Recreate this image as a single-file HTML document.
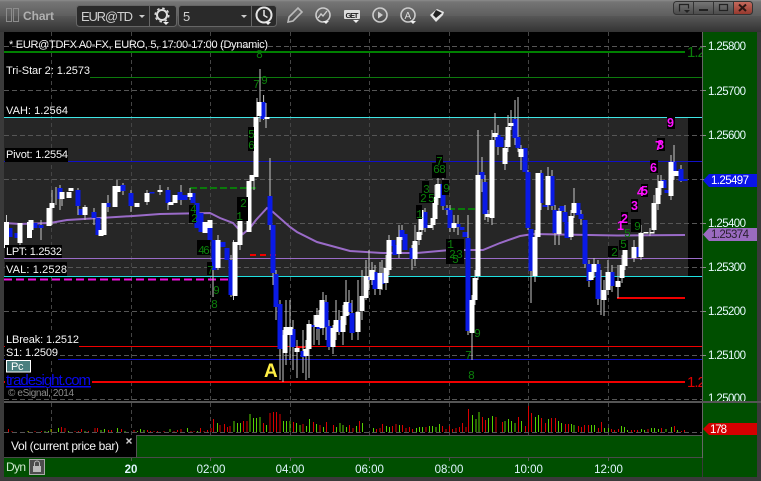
<!DOCTYPE html>
<html><head><meta charset="utf-8"><title>Chart</title>
<style>
html,body{margin:0;padding:0;background:#333;width:761px;height:481px;overflow:hidden}
svg{display:block}
text{font-family:"Liberation Sans",sans-serif;font-size:11px}
.l{fill:#f6f6f6}
.a{fill:#e8fbff;font-size:11.5px}
.g{fill:#0b7f0b;font-size:11.5px;font-family:"Liberation Mono",monospace}
.p{fill:#ff10ff;font-size:12.5px;font-weight:bold}
.t{fill:#e0f6ff;font-size:11.5px;text-anchor:middle}
</style></head><body>
<svg width="761" height="481" viewBox="0 0 761 481" xmlns="http://www.w3.org/2000/svg">
<defs>
<linearGradient id="h1" x1="0" y1="0" x2="0" y2="1"><stop offset="0" stop-color="#8c8c8c"/><stop offset=".12" stop-color="#757575"/><stop offset="1" stop-color="#5e5e5e"/></linearGradient>
<linearGradient id="h2" x1="0" y1="0" x2="0" y2="1"><stop offset="0" stop-color="#575757"/><stop offset="1" stop-color="#333"/></linearGradient>
<linearGradient id="rd" x1="0" y1="0" x2="0" y2="1"><stop offset="0" stop-color="#c4695c"/><stop offset="1" stop-color="#96392e"/></linearGradient>
<linearGradient id="bt" x1="0" y1="0" x2="0" y2="1"><stop offset="0" stop-color="#777"/><stop offset="1" stop-color="#4a4a4a"/></linearGradient>
</defs>
<rect width="761" height="481" fill="#3a3a3a"/>
<rect width="761" height="16" fill="url(#h1)"/>
<rect y="16" width="761" height="16" fill="url(#h2)"/>
<!-- main chart -->
<rect x="4" y="32" width="698" height="403" fill="#000"/>
<rect x="4" y="118" width="684" height="158" fill="#262626"/>
<!-- grid -->
<path d="M51.5 32V458M131.5 32V458M210.5 32V458M290.5 32V458M369.5 32V458M449.5 32V458M528.5 32V458M608.5 32V458" stroke="#444" stroke-width="1" stroke-dasharray="4 3" fill="none"/>
<path d="M4 46.500H702M4 90.500H702M4 135.500H702M4 179.500H702M4 223.500H702M4 267.500H702M4 311.500H702M4 355.500H702M4 399.500H702M4 432.500H702" stroke="#565656" stroke-width="1" stroke-dasharray="5 3" fill="none"/>
<!-- level lines -->
<rect x="4" y="51" width="681" height="2" fill="#008000"/>
<rect x="90" y="77" width="612" height="1" fill="#0c7a0c"/>
<rect x="4" y="117" width="698" height="1" fill="#3fe6e6"/>
<rect x="4" y="161" width="698" height="1" fill="#1010c8"/>
<rect x="4" y="258" width="698" height="1" fill="#9a6bc8"/>
<rect x="4" y="276" width="698" height="1" fill="#1fe0e0"/>
<path d="M4 279.500H228" stroke="#f010e0" stroke-width="2" stroke-dasharray="8 4" fill="none"/>
<rect x="4" y="346" width="698" height="1" fill="#f00000"/>
<rect x="4" y="359" width="698" height="1" fill="#1010c8"/>
<rect x="4" y="381" width="681" height="2" fill="#f00000"/>
<path d="M190 188H256" stroke="#0a7a0a" stroke-width="2" stroke-dasharray="7 3" fill="none"/>
<path d="M448 209H480" stroke="#0a7a0a" stroke-width="2" stroke-dasharray="7 3" fill="none"/>
<path d="M250 255H278" stroke="#f00000" stroke-width="2" stroke-dasharray="6 4" fill="none"/>
<rect x="296" y="347" width="9" height="1" fill="#f00"/>
<rect x="617" y="297" width="68" height="2" fill="#f00000"/>
<!-- purple average -->
<path d="M4 223L20 224L50 223L67 220L100 218L133 216L160 214L210 213L220 218L233 223L243 234L250 228L256 220L267 208L273 212L290 227L297 232L317 242L350 251L383 253L417 253L450 250L483 250L500 243L520 236L533 234L617 235.500L685 235" stroke="#9a6bc8" stroke-width="2" fill="none"/>
<!-- wicks -->
<path d="M6.500 215V250M20 225V245M41 220V240M52 190V225M56 187V205M60 185V210M62 190V206M78 188V215M85 205V220M94 208V225M108 195V212M117 180V200M123 183V195M131 190V212M147 190V205M160 185V195M168 187V210M181 185V205M190 188V200M213 263V297M218 235V270M231 255V297M233.500 240V300M240 215V250M257 98V120M260 69V122M263.600 95V120M266 103V128M254 150V190M270 158V230M273 225V285M276 270V320M280 300V380M283 330V382M286 300V365M290 300V360M293 320V370M297 340V378M303 330V373M306 340V380M309 320V378M314 315V345M317 308V340M319 310V345M323 292V335M326 295V340M329 320V350M333 325V354M336 300V340M339 310V335M343 305V345M346 280V325M349 290V315M352 300V340M358 280V340M362 270V320M366 260V300M369 250V290M372 262V285M375 265V295M380 262V295M382 260V290M386 255V290M389 235V275M399 225V258M402 225V240M412 245V270M415 225V266M419 225V245M422 210V235M425 208V232M433 210V230M435 185V225M438 175V205M443 178V210M447 205V215M450 205V232M454 215V232M458 215V235M468 215V335M472 295V360M475 270V305M478 130V280M482 157V192M485 175V220M488 210V222M492 130V225M495 113V140M498 125V155M505 140V170M508 115V152M511 110V130M515 100V145M518 97V152M521 145V170M528 170V230M531 260V303M535 230V282M541 170V210M548 167V210M552 170V210M555 205V245M559 208V245M565 205V230M571 210V240M574 188V218M581 210V225M585 250V268M589 260V287M594 258V278M598 260V305M601 270V315M604 280V316M608 260V295M612 265V292M618 265V298M622 255V283M625 250V270M634 240V262M641 225V260M650 228V236M654 195V232M658 175V210M661 175V195M671 155V200M674 145V180M681 165V182" stroke="#c8c8c8" stroke-width="1" fill="none"/>
<!-- blue bodies (under white at overlaps for some) -->
<path d="M10 228V237M17 233V238M35 223V228M41 225V228M60 188V199M78 190V206M81 209V215M94 212V218M98 218V235M108 203V207M123 185V191M131 193V206M152 192V193.500M168 190V203M180 192V200M185 195V200M193 193V203M197 203V228M201 213V232M210 228V240M214 240V270M223 242V247M227 248V260M231 260V295M263 102V119M270 196V225M273 225V273M276 274V307M280 304V349M293 329V347M303 351V357M314 325V327M319 318V329M326 302V327M329 326V347M339 320V332M349 303V312M352 313V333M368 277V280M375 272V289M382 273V284M393 240V246M395 245V255M402 230V237M405 234V250M412 248V259M425 212V228M443 184V206M447 208V210M450 210V228M458 224V227M462 227V230M465 232V237M468 238V331M482 172V179M485 182V214M498 135V147M501 137V147M515 119V138M518 137V148M525 148V172M528 172V228M531 229V271M541 173V203M545 205V207M552 176V206M555 210V233M562 206V211M565 212V222M567 222V238M578 203V215M581 214V219M585 220V264M589 264V281M598 264V299M612 272V286M637 247V257M664 180V188M667 190V193M674 162V175M681 169V181M685 179V181" stroke="#0a1ae6" stroke-width="5" fill="none"/>
<!-- white bodies -->
<path d="M6.500 222V248M20 223V243M29.500 222V238M31 220V230M49 208V226M52 203V208M62 192V199M69 192V198M71 188V191M85 207V215M101 230V236M104 203V235M115 186V207M118 186V192M137 203V207M147 193V202M160 190V192M171 202V205M175 195V203M190 193V197M205 222V233M210 220V228M218 240V268M235 242V296M240 220V245M249 181V232M252 175V181M256 117V177M259 102V116M267 117V119M285 335V353M286 327V335M290 327V335M297 348V352M306 349V356M309 324V349M317 315V327M322 300V328M333 328V347M336 320V332M343 316V332M346 302V316M358 312V332M362 296V311M366 276V298M372 270V280M380 273V289M386 268V283M389 240V270M399 237V254M415 241V259M419 232V240M421 210V230M430 225V228M433 218V225M435 197V219M438 184V198M454 223V228M472 300V333M475 278V300M478 175V276M488 214V217M492 140V218M495 133V137M505 148V164M508 127V147M511 123V126M521 149V157M535 237V276M538 173V237M548 176V205M559 211V234M571 216V237M574 203V213M591 272V280M594 264V272M604 290V300M608 272V290M618 281V287M622 265V278M625 247V266M634 247V258M641 233V257M646 232V233.500M652 232V233.500M654 203V230M658 188V204M661 181V188M671 162V196M676 171V176" stroke="#fff" stroke-width="5" fill="none"/>
<!-- label backgrounds -->
<g fill="#000">
<rect x="5" y="148" width="63" height="14"/><rect x="5" y="245" width="57" height="13"/><rect x="5" y="262" width="62" height="14"/>
<rect x="5" y="333" width="74" height="14"/><rect x="5" y="347" width="53" height="13"/>
<rect x="5" y="373" width="87" height="13"/>
<rect x="248" y="127" width="6" height="24"/><rect x="237" y="197" width="11" height="24"/><rect x="189" y="205" width="7" height="18"/>
<rect x="197" y="240" width="13" height="15"/><rect x="207" y="262" width="5" height="13"/>
<rect x="436" y="155" width="7" height="10"/><rect x="432" y="163" width="14" height="15"/><rect x="422" y="181" width="7" height="12"/><rect x="419" y="193" width="15" height="10"/><rect x="416" y="205" width="6" height="14"/><rect x="442" y="180" width="7" height="15"/>
<rect x="446" y="239" width="18" height="25"/>
<rect x="667" y="116" width="8" height="13"/><rect x="657" y="138" width="8" height="13"/><rect x="650" y="160" width="8" height="13"/><rect x="641" y="184" width="7" height="13"/><rect x="631" y="199" width="7" height="13"/><rect x="621" y="212" width="7" height="13"/>
<rect x="631" y="219" width="10" height="13"/><rect x="608" y="246" width="10" height="11"/><rect x="619" y="240" width="9" height="10"/>
</g>
<!-- indicator text -->
<text x="9" y="48" class="l" textLength="259">* EUR@TDFX A0-FX, EURO, 5, 17:00-17:00 (Dynamic)</text>
<text x="6" y="74" class="l" textLength="84">Tri-Star 2: 1.2573</text>
<text x="6" y="114" class="l" textLength="62">VAH: 1.2564</text>
<text x="6" y="158" class="l" textLength="62">Pivot: 1.2554</text>
<text x="6" y="255" class="l" textLength="56">LPT: 1.2532</text>
<text x="6" y="273" class="l" textLength="61">VAL: 1.2528</text>
<text x="6" y="343" class="l" textLength="73">LBreak: 1.2512</text>
<text x="6" y="356" class="l" textLength="52">S1: 1.2509</text>
<rect x="6.500" y="360.500" width="24" height="11.500" fill="#4a7f80" stroke="#fff"/>
<text x="11" y="370" style="font-size:11px;fill:#fff">P</text><text x="18" y="370" style="font-size:11px;fill:#fff">c</text>
<text x="6" y="385" style="font-size:15px;fill:#0808f0;text-decoration:underline" textLength="85">tradesight.com</text>
<text x="8" y="396" style="font-size:10px;fill:#8c8c8c" textLength="66">© eSignal, 2014</text>
<text x="264" y="377" style="font-size:19px;font-weight:bold;fill:#ffee44">A</text>
<!-- sequence numbers green -->
<text class="g" x="256" y="58">8</text><text class="g" x="253" y="88">7</text><text class="g" x="261" y="84">9</text>
<text class="g" x="248" y="138">5</text><text class="g" x="248" y="149">6</text>
<text class="g" x="240" y="207">2</text><text class="g" x="236" y="220">1</text>
<text class="g" x="190" y="213">4</text><text class="g" x="191" y="222">2</text>
<text class="g" x="198" y="254">4</text><text class="g" x="203" y="254">6</text><text class="g" x="207" y="274">7</text>
<text class="g" x="213" y="294">9</text><text class="g" x="211" y="308">8</text>
<text class="g" x="436" y="165">7</text><text class="g" x="433" y="173">6</text><text class="g" x="439" y="173">8</text>
<text class="g" x="423" y="193">3</text><text class="g" x="420" y="202">2</text><text class="g" x="428" y="202">5</text><text class="g" x="416" y="218">1</text><text class="g" x="443" y="192">9</text>
<text class="g" x="447" y="248">1</text><text class="g" x="449" y="258">2</text><text class="g" x="456" y="258">3</text><text class="g" x="452" y="263">5</text>
<text class="g" x="474" y="337">9</text><text class="g" x="465" y="359">7</text><text class="g" x="468" y="379">8</text>
<text class="g" x="634" y="230">9</text><text class="g" x="624" y="237">5</text><text class="g" x="620" y="248">5</text><text class="g" x="611" y="256">2</text>
<!-- sequence numbers pink -->
<text class="p" x="655" y="150">7</text><text class="p" x="667" y="127">9</text><text class="p" x="657" y="149">8</text>
<text class="p" x="650" y="172">6</text><text class="p" x="637" y="196">4</text><text class="p" x="641" y="195">5</text>
<text class="p" x="631" y="210">3</text><text class="p" x="621" y="223">2</text><text class="p" x="617" y="230">1</text>
<text x="687" y="57" style="font-size:15px;fill:#0b7f0b;letter-spacing:-1px">1.2</text>
<text x="687" y="387" style="font-size:15px;fill:#e00000;letter-spacing:-1px">1.2</text>
<!-- volume -->
<rect x="4" y="401" width="757" height="2" fill="#555"/>
<path d="M8.500 432v-3M12 432v-1M28.500 432v-1M35 432v-1M41.500 432v-1M51.500 432v-3M61.500 432v-5M65 432v-4M75 432v-1M78.500 432v-1M81.500 432v-3M88.500 432v-1M95 432v-4M97.500 432v-4M108.500 432v-2M111.500 432v-2M121.500 432v-3M125 432v-1M134 432v-2M147.500 432v-2M150.500 432v-1M154 432v-1M157.500 432v-1M164 432v-1M174 432v-1M177.500 432v-2M181 432v-3M191 432v-1M194 432v-1M200.500 432v-4M204 432v-1M207.500 432v-2M211 432v-4M213.500 432v-13M220 432v-7M224.500 432v-8M227.500 432v-5M230 432v-6M243.500 432v-11M247 432v-11M263.500 432v-9M270 432v-19M273.500 432v-20M276.500 432v-20M280 432v-18M293.500 432v-10M303 432v-8M313.500 432v-10M320 432v-7M326.500 432v-10M333.500 432v-7M349.500 432v-7M353 432v-4M359.500 432v-11M376.500 432v-3M380 432v-4M382.500 432v-8M392.500 432v-6M396 432v-8M402.500 432v-7M406 432v-4M409.500 432v-5M412.500 432v-3M426 432v-5M442.500 432v-6M446 432v-3M449.500 432v-6M452.500 432v-3M456 432v-4M459.500 432v-5M462.500 432v-9M466 432v-5M468.500 432v-23M482.500 432v-15M485.500 432v-12M496 432v-15M502.500 432v-10M518.500 432v-15M525.500 432v-6M528.500 432v-26M531.500 432v-19M541.500 432v-14M545.500 432v-9M551.500 432v-14M555.500 432v-14M565.500 432v-8M568.500 432v-8M578.500 432v-6M581.500 432v-5M584.500 432v-7M588.500 432v-7M598.500 432v-4M601.500 432v-10M611.500 432v-3M614.500 432v-2M618.500 432v-3M631.500 432v-2M634.500 432v-2M637.500 432v-2M648 432v-3M661.500 432v-4M674.500 432v-6M681.500 432v-1M684.500 432v-2" stroke="#d80000" stroke-width="1" fill="none"/>
<path d="M28 432v-1M45 432v-1M48.500 432v-1M51 432v-3M58.500 432v-4M68.500 432v-1M85 432v-1M101 432v-2M104.500 432v-3M117.500 432v-4M125 432v-1M137.500 432v-1M140.500 432v-3M144 432v-2M170 432v-3M187.500 432v-4M197.500 432v-1M217.500 432v-9M234 432v-11M237.500 432v-9M240.500 432v-9M250 432v-18M253.500 432v-14M256.500 432v-14M260 432v-15M266.500 432v-7M283.500 432v-11M286.500 432v-11M290 432v-11M296.500 432v-9M300 432v-7M306.500 432v-6M309.500 432v-13M316.500 432v-8M323.500 432v-5M336.500 432v-5M340 432v-9M343 432v-7M346.500 432v-5M356.500 432v-6M362.500 432v-9M373.500 432v-4M386.500 432v-6M389.500 432v-5M399.500 432v-7M416.500 432v-4M419.500 432v-5M422.500 432v-5M429.500 432v-6M432.500 432v-6M436 432v-5M439.500 432v-8M472.500 432v-17M476 432v-13M479 432v-20M488.500 432v-14M492.500 432v-16M505 432v-11M508.500 432v-13M511.500 432v-11M515 432v-9M521.500 432v-11M535.500 432v-15M538.500 432v-17M548.500 432v-13M558.500 432v-11M561.500 432v-9M571.500 432v-8M574 432v-7M591.500 432v-7M594.500 432v-7M604.500 432v-4M608.500 432v-4M621.500 432v-6M624.500 432v-5M627.500 432v-2M641.500 432v-3M644.500 432v-2M651.500 432v-4M654.500 432v-4M658.500 432v-3M666 432v-3M671.500 432v-5M677.500 432v-2" stroke="#55d000" stroke-width="1" fill="none"/>
<!-- bottom zone -->
<rect x="4" y="435" width="698" height="42" fill="#004f00"/>
<rect x="4" y="435" width="132" height="22" fill="#000"/>
<rect x="136" y="435" width="566" height="1" fill="#555"/>
<rect x="136" y="435" width="1" height="22" fill="#555"/>
<rect x="4" y="457" width="698" height="1" fill="#4a4a4a"/>
<text x="11" y="450" style="font-size:12px;fill:#f4f4f4" textLength="108">Vol (current price bar)</text>
<path d="M126.500 438.500l5 5M131.500 438.500l-5 5" stroke="#ccc" stroke-width="1.400"/>
<path d="M131.500 458v3M210.500 458v3M290.500 458v3M369.500 458v3M449.500 458v3M528.500 458v3M608.500 458v3" stroke="#555" fill="none"/>
<text x="6" y="471" style="font-size:12px;fill:#cfe8cf" textLength="20">Dyn</text>
<rect x="29.500" y="459.500" width="15" height="15" fill="#4c4c4c" stroke="#aaa"/>
<rect x="33" y="466" width="8" height="6" fill="#bbb"/><path d="M34.500 466v-2.500a2.500 2.500 0 0 1 5 0V466" stroke="#bbb" fill="none"/>
<text x="131" y="473" class="t" style="font-weight:bold">20</text>
<text x="211" y="473" class="t">02:00</text><text x="290" y="473" class="t">04:00</text><text x="369.500" y="473" class="t">06:00</text><text x="449" y="473" class="t">08:00</text><text x="528.500" y="473" class="t">10:00</text><text x="608.500" y="473" class="t">12:00</text>
<!-- price axis -->
<rect x="703" y="32" width="54" height="445" fill="#004f00"/>
<rect x="702" y="32" width="1" height="426" fill="#666"/>
<path d="M702 46.500h4M702 90.500h4M702 135.500h4M702 179.500h4M702 223.500h4M702 267.500h4M702 311.500h4M702 355.500h4" stroke="#888"/>
<text x="708" y="50" class="a" textLength="38">1.25800</text>
<text x="708" y="95" class="a" textLength="38">1.25700</text>
<text x="708" y="139" class="a" textLength="38">1.25600</text>
<text x="708" y="227" class="a" textLength="38">1.25400</text>
<text x="708" y="271" class="a" textLength="38">1.25300</text>
<text x="708" y="315" class="a" textLength="38">1.25200</text>
<text x="708" y="359" class="a" textLength="38">1.25100</text>
<text x="708" y="402" class="a" textLength="38">1.25000</text>
<rect x="702" y="401" width="59" height="2" fill="#555"/>
<path d="M703 180.500l6-6.500H757V187H709z" fill="#0a14e6"/>
<text x="711" y="184" style="font-size:11.500px;fill:#fff" textLength="38">1.25497</text>
<path d="M703 234.500l6-6.500H757V241H709z" fill="#9a6bc0"/>
<text x="711" y="238" style="font-size:11.500px;fill:#2a2030" textLength="38">1.25374</text>
<path d="M703 429l6-6H757V435H709z" fill="#d40000"/>
<text x="710" y="433" style="font-size:11.500px;fill:#fff" textLength="17">178</text>
<!-- toolbar -->
<rect x="6.500" y="8.500" width="5" height="13" fill="none" stroke="#8c8c8c"/>
<rect x="13.500" y="8.500" width="5" height="13" fill="none" stroke="#8c8c8c"/>
<text x="23" y="20" style="font-size:12px;font-weight:bold;fill:#b0b0b0" textLength="31">Chart</text>
<rect x="76.500" y="5.500" width="100" height="21" rx="3" fill="#2a2a2a" stroke="#666"/>
<rect x="178.500" y="5.500" width="98" height="21" rx="3" fill="#2a2a2a" stroke="#666"/>
<path d="M149.500 6v20M251.500 6v20" stroke="#666"/>
<text x="81" y="21" style="font-size:13px;fill:#cfcfcf" textLength="52">EUR@TD</text>
<path d="M139 15h6l-3 3z" fill="#ccc"/>
<text x="183" y="21" style="font-size:13px;fill:#cfcfcf">5</text>
<path d="M241 15h6l-3 3z" fill="#ccc"/>
<!-- gear -->
<circle cx="162" cy="15" r="5" fill="none" stroke="#ddd" stroke-width="2"/>
<circle cx="162" cy="15" r="6.800" fill="none" stroke="#ddd" stroke-width="1.500" stroke-dasharray="2.500 2.840"/>
<path d="M163 22h6l-3 3z" fill="#eee"/>
<!-- clock -->
<circle cx="264" cy="15" r="7.500" fill="none" stroke="#e4e4e4" stroke-width="2"/>
<path d="M264 10v5.500l3.500 2" fill="none" stroke="#e4e4e4" stroke-width="1.500"/>
<path d="M265 22h6l-3 3z" fill="#eee"/>
<!-- pencil -->
<path d="M288 22l1-5 9-9 4 4-9 9z" fill="none" stroke="#bbb" stroke-width="1.600"/>
<!-- chart circle -->
<circle cx="323" cy="15" r="7" fill="none" stroke="#ccc" stroke-width="1.600"/>
<path d="M318 18l3-4 2 2 4-5" fill="none" stroke="#ccc" stroke-width="1.400"/>
<path d="M323 21h6l-3 3z" fill="#eee"/>
<!-- GET -->
<rect x="344" y="10" width="16" height="9" rx="1" fill="#ddd"/>
<text x="345.500" y="18" style="font-size:7.500px;font-weight:bold;fill:#222" textLength="13">GET</text>
<path d="M353 20h6l-3 3z" fill="#eee"/>
<!-- play -->
<circle cx="380" cy="15" r="7" fill="none" stroke="#ccc" stroke-width="1.600"/>
<path d="M378 11.500l5 3.500-5 3.500z" fill="#ccc"/>
<!-- A -->
<circle cx="408" cy="15" r="7" fill="none" stroke="#ccc" stroke-width="1.600"/>
<text x="404.500" y="19" style="font-size:10px;fill:#ddd">A</text>
<path d="M410 21h6l-3 3z" fill="#eee"/>
<!-- diamond tag -->
<path d="M430 15l7-6 7 3-1 3-7 7z" fill="#e4e4e4"/>
<path d="M436 10l6 3-6 5-3-3z" fill="#222"/>
<!-- window buttons -->
<rect x="673.500" y="1.500" width="79" height="13" rx="3" fill="url(#bt)" stroke="#333"/>
<path d="M733 2h16a3 3 0 0 1 3 3v6a3 3 0 0 1-3 3h-16z" fill="url(#rd)"/>
<path d="M693.500 2v12M713.500 2v12M733.500 2v12" stroke="#333"/>
<path d="M679.500 11.500v-7h9v4" fill="none" stroke="#222" stroke-width="1.200"/><path d="M684 10h6l-3 3z" fill="#222"/>
<rect x="699" y="9" width="9" height="2" fill="#222"/>
<rect x="719.500" y="4.500" width="8" height="6" fill="none" stroke="#222" stroke-width="1.200"/>
<path d="M739 4.500l7 6.500M746 4.500l-7 6.500" stroke="#2a1512" stroke-width="2"/>
</svg>
</body></html>
